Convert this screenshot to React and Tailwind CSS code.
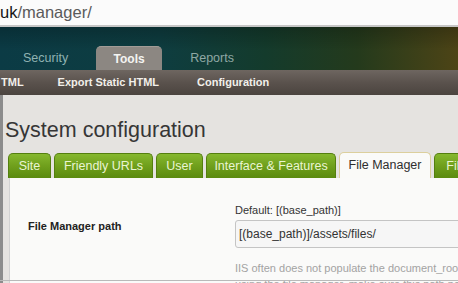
import React from 'react';

const tabs = [
    { label: "Site", width: "w-[43px]" },
    { label: "Friendly URLs", width: "w-[99px]" },
    { label: "User", width: "w-[47px]" },
    { label: "Interface & Features", width: "w-[130px]" },
    { label: "File Manager", width: "w-[92px]", active: true },
    { label: "File Storage", width: "w-[92px]" },
];

const App = () => {
    return (
        <div className="relative w-[458px] h-[283px] overflow-hidden flex flex-col bg-[#e5e3e0] font-['Liberation_Sans',Arial,sans-serif]">
            {/* Address bar */}
            <div className="h-[27px] shrink-0 flex items-center bg-[#fbfbfb] border-b-2 border-[#c6c6c6] text-[16.5px] leading-none">
                <span className="text-[#151515]">uk</span>
                <span className="text-[#5a5a5a]">/manager/</span>
            </div>

            {/* Top navigation */}
            <div className="h-[43px] shrink-0 flex items-end bg-[linear-gradient(180deg,rgba(0,0,0,0.22)_0%,rgba(0,0,0,0)_55%),linear-gradient(90deg,#0b3b45_0%,#0e3d40_35%,#143b2c_58%,#243a1c_78%,#4d4416_100%)] text-[12.5px]">
                <span className="ml-[23px] h-[24px] flex items-center text-[#8fb2b2]">Security</span>
                <span className="ml-[28px] w-[66px] h-[24px] flex items-center justify-center rounded-t-[5px] bg-[#8c8782] border-t border-[#a29c97] text-[12px] font-bold text-[#f4f4f2]">Tools</span>
                <span className="ml-[28px] h-[24px] flex items-center text-[#8fa8a4]">Reports</span>
            </div>

            {/* Sub navigation */}
            <div className="h-[25px] shrink-0 flex items-center bg-[linear-gradient(180deg,#6e6660_0%,#5a524d_50%,#4b443f_100%)] text-[11px] font-bold text-[#f2efea] whitespace-nowrap">
                <span className="ml-[1px]">TML</span>
                <span className="ml-[34px]">Export Static HTML</span>
                <span className="ml-[38px]">Configuration</span>
            </div>

            {/* Page */}
            <div className="flex-1 flex flex-col border-l-[3px] border-[#8c8c8c]">
                <h1 className="pt-[22px] pl-[2px] text-[21.5px] leading-[26px] text-[#363636] whitespace-nowrap">System configuration</h1>

                <div className="mt-[9px] ml-[5px] flex items-end gap-[3px] whitespace-nowrap">
                    {tabs.map((t) => (
                        <div
                            key={t.label}
                            className={`${t.width} shrink-0 h-[25px] flex items-center px-[10px] overflow-hidden rounded-t-[5px] text-[12.5px] ${t.active
                                ? "bg-[#fafaf8] border border-b-0 border-[#dccf9c] text-[#2e2e2e] h-[26px] justify-center"
                                : "bg-[linear-gradient(180deg,#86b82e_0%,#6f9f1c_50%,#5b8b10_100%)] border border-b-0 border-[#547f0f] text-[#eaf5d2] justify-center"
                                }`}
                        >
                            {t.label}
                        </div>
                    ))}
                </div>

                <div className="flex-1 ml-[6px] bg-[#fafaf9] border-l border-[#d2d2d2] flex pt-[26px]">
                    <div className="w-[225px] shrink-0 pl-[18px] pt-[14px] text-[11px] font-bold text-[#222] whitespace-nowrap">
                        File Manager path
                    </div>
                    <div className="flex flex-col whitespace-nowrap">
                        <div className="text-[11px] leading-[13px] text-[#333]">Default: [(base_path)]</div>
                        <div className="mt-[3px] w-[240px] h-[28px] flex items-center pl-[3px] bg-[#f6f6f6] border border-[#c4c4c4] rounded-[3px] text-[12px] text-[#333]">
                            [(base_path)]/assets/files/
                        </div>
                        <div className="mt-[12px] text-[11px] leading-[16px] text-[#a3a3a3]">
                            <div>IIS often does not populate the document_root</div>
                            <div>using the file manager, make sure this path points</div>
                        </div>
                    </div>
                </div>
            </div>

            {/* Window frame bottom edge */}
            <div className="absolute left-0 right-0 top-[280px] h-px bg-[#b9b9b9]" />
        </div>
    );
};

export default App;
